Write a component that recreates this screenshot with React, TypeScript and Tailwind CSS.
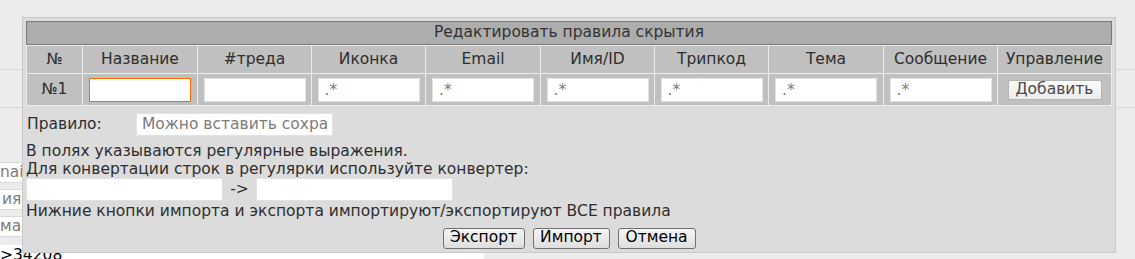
import React from "react"

const columns = [
  "№",
  "Название",
  "#треда",
  "Иконка",
  "Email",
  "Имя/ID",
  "Трипкод",
  "Тема",
  "Сообщение",
  "Управление",
]

const fieldInput =
  "h-[24px] w-[102px] border border-[#e2e2e2] bg-white px-[6px] text-[15.5px] text-black outline-none placeholder:text-[#7c7c7c]"

const bigButton =
  "h-[21px] rounded-[3px] border border-[#707070] bg-linear-to-b from-[#f6f6f6] to-[#dedede] text-[15.5px] leading-none text-black"

function RulesTable() {
  return (
    <div className="grid grid-cols-[55px_114px_113px_113px_114px_113px_113px_114px_113px_113px] gap-px bg-[#ececec] p-px">
      {columns.map((c) => (
        <div
          key={c}
          className="flex h-[27px] items-center justify-center bg-[#c0c0c0] text-[#2e2e2e]"
        >
          {c}
        </div>
      ))}

      <div className="flex h-[31px] items-center justify-center bg-[#c0c0c0] text-[#2e2e2e]">
        №1
      </div>
      <div className="flex items-center justify-center bg-[#c0c0c0]">
        <input className={fieldInput + " !border-[#ff6a00]"} />
      </div>
      <div className="flex items-center justify-center bg-[#c0c0c0]">
        <input className={fieldInput} />
      </div>
      {["icon", "email", "name", "trip", "subj", "msg"].map((k) => (
        <div key={k} className="flex items-center justify-center bg-[#c0c0c0]">
          <input className={fieldInput} placeholder=".*" />
        </div>
      ))}
      <div className="flex items-center justify-center bg-[#c0c0c0]">
        <button className="h-[20px] w-[94px] rounded-[2px] border border-[#b4b4b4] bg-linear-to-b from-[#fafafa] to-[#ececec] text-[15.5px] leading-none text-[#4a4a4a]">
          Добавить
        </button>
      </div>
    </div>
  )
}

export default function App() {
  return (
    <div className="relative h-[259px] w-[1135px] overflow-hidden bg-[#ececec] font-['DejaVu_Sans',Verdana,sans-serif] text-[15.5px]">
      {/* page behind the dialog */}
      <div className="h-[70px] border-b border-[#d6d6d6]" />
      <div className="h-[38px] border-b border-[#d6d6d6]" />
      <div className="mt-[54px] flex w-[300px] flex-col gap-[6px] text-[#7c7c7c]">
        <div className="h-[21px] border border-l-0 border-[#dadada] bg-white leading-[19px]">nai</div>
        <div className="h-[21px] border border-l-0 border-[#dadada] bg-white pl-[2px] leading-[19px]">ия</div>
        <div className="h-[21px] border border-l-0 border-[#dadada] bg-white leading-[19px]">ма</div>
      </div>
      <div className="mt-[8px] h-[20px] w-[484px] bg-white text-[15.5px] leading-[20px] text-black">
        &gt;34208
      </div>

      {/* dialog */}
      <div className="absolute left-[22px] top-[17px] h-[236px] w-[1094px] border border-[#c9c9c9] bg-[#dcdcdc] p-[3px] text-[#2e2e2e]">
        <div className="flex h-[24px] items-center justify-center border border-[#7a7a7a] bg-[#adadad] text-[#333]">
          Редактировать правила скрытия
        </div>
        <RulesTable />

        <div className="mt-[7px] flex items-center">
          <span className="w-[110px] pl-px">Правило:</span>
          <input
            className="h-[23px] w-[197px] border border-[#e2e2e2] bg-white px-[5px] outline-none placeholder:text-[#7c7c7c]"
            placeholder="Можно вставить сохранённое правило"
          />
        </div>

        <div className="mt-[6px] leading-[18px]">
          <div>В полях указываются регулярные выражения.</div>
          <div>Для конвертации строк в регулярки используйте конвертер:</div>
        </div>
        <div className="flex items-center">
          <input className="h-[23px] w-[197px] border border-[#e2e2e2] bg-white outline-none" />
          <span className="w-[33px] text-center">-&gt;</span>
          <input className="h-[23px] w-[197px] border border-[#e2e2e2] bg-white outline-none" />
        </div>
        <div className="leading-[18px]">
          Нижние кнопки импорта и экспорта импортируют/экспортируют ВСЕ правила
        </div>
        <div className="mt-[8px] flex justify-center gap-[8px]">
          <button className={bigButton + " w-[82px]"}>Экспорт</button>
          <button className={bigButton + " w-[77px]"}>Импорт</button>
          <button className={bigButton + " w-[78px]"}>Отмена</button>
        </div>
      </div>
    </div>
  )
}
